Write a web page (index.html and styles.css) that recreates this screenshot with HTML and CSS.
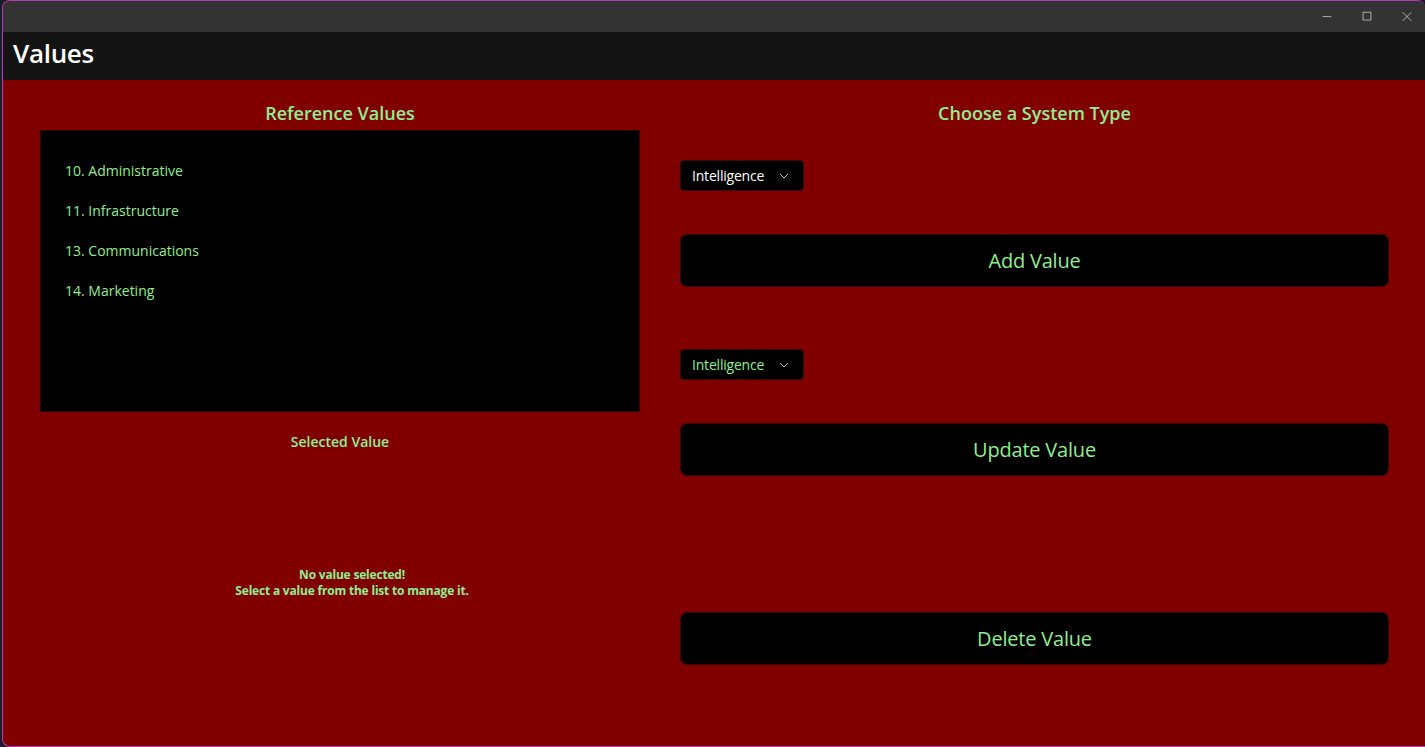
FILE: index.html
```html
<!DOCTYPE html>
<html>
<head>
<meta charset="utf-8">
<link rel="stylesheet" href="styles.css">
</head>
<body>
<div class="window">
  <div class="titlebar">
    <div class="caption-buttons">
      <svg class="cap" width="46" height="32" viewBox="0 0 46 32"><path d="M18 15.5h10" stroke="#bdbdbd" stroke-width="1"/></svg>
      <svg class="cap" width="46" height="32" viewBox="0 0 46 32"><rect x="18.5" y="10.5" width="9" height="9" fill="none" stroke="#bdbdbd" stroke-width="1"/></svg>
      <svg class="cap" width="46" height="32" viewBox="0 0 46 32"><path d="M18 10.5l10 10M28 10.5l-10 10" stroke="#bdbdbd" stroke-width="1"/></svg>
    </div>
  </div>
  <div class="header"><h1 class="page-title">Values</h1></div>
  <div class="main">
    <div class="col-left">
      <h2 class="section-title">Reference Values</h2>
      <div class="listbox">
        <div class="list-item">10. Administrative</div>
        <div class="list-item">11. Infrastructure</div>
        <div class="list-item">13. Communications</div>
        <div class="list-item">14. Marketing</div>
      </div>
      <h3 class="selected-title">Selected Value</h3>
      <div class="empty-note">
        <div>No value selected!</div>
        <div>Select a value from the list to manage it.</div>
      </div>
    </div>
    <div class="col-right">
      <h2 class="section-title">Choose a System Type</h2>
      <div class="combo combo-first"><span>Intelligence</span><svg width="10" height="6" viewBox="0 0 10 6"><path d="M1 1l4 4 4-4" fill="none" stroke="#c8c8c8" stroke-width="1"/></svg></div>
      <button class="action">Add Value</button>
      <div class="combo combo-green"><span>Intelligence</span><svg width="10" height="6" viewBox="0 0 10 6"><path d="M1 1l4 4 4-4" fill="none" stroke="#c8c8c8" stroke-width="1"/></svg></div>
      <button class="action">Update Value</button>
      <button class="action action-delete">Delete Value</button>
    </div>
  </div>
</div>
</body>
</html>
```
FILE: styles.css
```css
html, body {
  margin: 0;
  padding: 0;
  height: 100%;
  background: #1c1c2c;
  overflow: hidden;
}
body {
  font-family: "Open Sans", "Noto Sans", sans-serif;
}
.window {
  margin-left: 2px;
  height: 747px;
  box-sizing: border-box;
  border: 1px solid #b63cb6;
  border-right: none;
  border-radius: 8px 8px 0 8px;
  overflow: hidden;
  display: flex;
  flex-direction: column;
  background: #800000;
}
.titlebar {
  height: 31px;
  background: #333333;
  display: flex;
  justify-content: flex-end;
}
.caption-buttons {
  display: flex;
  margin-right: -2px;
}
.cap {
  display: block;
  width: 40px;
}
.header {
  height: 48px;
  background: #141414;
  display: flex;
  align-items: center;
}
.page-title {
  margin: 0 0 6px 10px;
  color: #ffffff;
  font-size: 26px;
  font-weight: 600;
  letter-spacing: -0.3px;
}
.main {
  flex: 1;
  display: flex;
  padding: 21px 36px 0 37px;
  gap: 40px;
}
.col-left {
  width: 600px;
  display: flex;
  flex-direction: column;
}
.col-right {
  flex: 1;
  display: flex;
  flex-direction: column;
}
.section-title {
  margin: 0;
  height: 29px;
  line-height: 24px;
  text-align: center;
  color: #90ee90;
  font-size: 18px;
  font-weight: 600;
}
.listbox {
  height: 282px;
  box-sizing: border-box;
  background: #000000;
  border: 1px solid #2a0a0a;
  padding: 20px 24px 0;
}
.list-item {
  height: 40px;
  line-height: 40px;
  color: #90ee90;
  font-size: 14px;
}
.selected-title {
  margin: 21px 0 0;
  text-align: center;
  color: #90ee90;
  font-size: 14px;
  font-weight: 600;
  line-height: 18px;
}
.empty-note {
  margin-top: 116px;
  padding-left: 24px;
  text-align: center;
  color: #90ee90;
  font-size: 12px;
  font-weight: 700;
  line-height: 16px;
  letter-spacing: -0.2px;
}
.combo {
  width: 124px;
  height: 31px;
  box-sizing: border-box;
  background: #000000;
  border: 1px solid #3a0a0a;
  border-radius: 4px;
  display: flex;
  align-items: center;
  justify-content: space-between;
  padding: 0 14px 0 11px;
  color: #ffffff;
  font-size: 14px;
  letter-spacing: -0.2px;
}
.combo svg {
  display: block;
}
.combo-first {
  margin-top: 30px;
}
.combo-green {
  margin-top: 62px;
  color: #90ee90;
}
.action {
  display: block;
  width: 709px;
  height: 53px;
  margin-top: 43px;
  background: #000000;
  border: 1px solid #3a0a0a;
  border-radius: 7px;
  color: #90ee90;
  font-family: "Open Sans", "Noto Sans", sans-serif;
  font-size: 20px;
  letter-spacing: -0.2px;
  padding: 0;
}
.action-delete {
  margin-top: 136px;
}
```
